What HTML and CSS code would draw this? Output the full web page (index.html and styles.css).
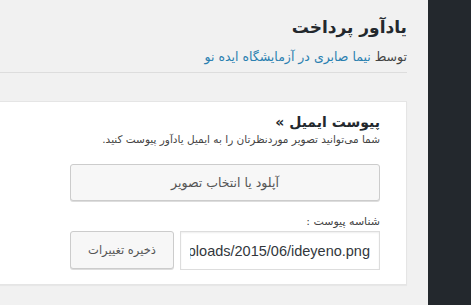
FILE: index.html
```html
<!DOCTYPE html>
<html lang="fa" dir="rtl">
<head>
    <meta charset="UTF-8">
    <title>یادآور پرداخت</title>
    <link rel="stylesheet" href="styles.css">
</head>
<body>
    <div class="sidebar"></div>
    <div class="main">
        <div class="wrap">
            <h1 class="page-title">یادآور پرداخت</h1>
            <p class="byline">توسط <a href="#">نیما صابری در آزمایشگاه ایده نو</a></p>
            <hr class="sep">

            <div class="card">
                <h2 class="card-title">پیوست ایمیل »</h2>
                <p class="card-desc">شما می‌توانید تصویر موردنظرتان را به ایمیل یادآور پیوست کنید.</p>

                <div class="field">
                    <button class="btn btn-wide">آپلود یا انتخاب تصویر</button>
                    <label class="field-label" for="attachUrl">شناسه پیوست :</label>
                    <div class="field-row">
                        <input type="text" id="attachUrl" class="url-input" value="http://ideyeno.com/wp-content/uploads/2015/06/ideyeno.png">
                        <button class="btn btn-save">ذخیره تغییرات</button>
                    </div>
                </div>
            </div>
        </div>
    </div>
</body>
</html>
```

FILE: styles.css
```css
html, body {
    height: 100%;
}
body {
    margin: 0;
    padding: 0;
    display: flex;
    background-color: #f1f1f1;
    font-family: 'DejaVu Sans', sans-serif;
    color: #444;
    overflow: hidden;
}
.sidebar {
    width: 43px;
    flex-shrink: 0;
    background-color: #23282d;
}
.main {
    flex: 1;
    overflow: hidden;
    padding-right: 21px;
}
.wrap {
    margin-left: -10px;
}
.page-title {
    margin: 15px 0 0;
    font-size: 17px;
    line-height: 24px;
    font-weight: bold;
    color: #23282d;
}
.byline {
    margin: 9px 0 0;
    font-size: 12.5px;
    line-height: 18px;
    color: #444;
}
.byline a {
    color: #2a80b0;
    text-decoration: none;
}
.sep {
    margin: 6px 0 0;
    border: none;
    border-top: 1px solid #ddd;
    height: 0;
}
.card {
    margin-top: 28px;
    background-color: #fff;
    border: 1px solid #e5e5e5;
    box-shadow: 0 1px 1px rgba(0, 0, 0, 0.04);
    padding: 10px 26px 14px;
}
.card-title {
    margin: 0;
    font-size: 14px;
    line-height: 20px;
    font-weight: bold;
    color: #23282d;
}
.card-desc {
    margin: -1px 0 0;
    font-size: 10.5px;
    line-height: 16px;
    color: #444;
}
.field {
    width: 310px;
    margin-top: 17px;
}
.btn {
    font-family: 'DejaVu Sans', sans-serif;
    font-size: 11.5px;
    color: #555;
    background-color: #f7f7f7;
    border: 1px solid #ccc;
    border-radius: 3px;
    box-shadow: 0 1px 0 #ddd;
    cursor: pointer;
}
.btn-wide {
    display: block;
    width: 100%;
    height: 37px;
    font-size: 12.5px;
}
.field-label {
    display: block;
    margin-top: 13px;
    font-size: 11px;
    line-height: 16px;
    color: #444;
}
.field-row {
    display: flex;
    gap: 6px;
    margin-top: 1px;
}
.url-input {
    width: 200px;
    height: 39px;
    box-sizing: border-box;
    padding: 0 9px;
    border: 1px solid #ddd;
    box-shadow: inset 0 1px 2px rgba(0, 0, 0, 0.07);
    font-family: 'Liberation Sans', sans-serif;
    font-size: 14.5px;
    color: #32373c;
    background-color: #fff;
}
.btn-save {
    width: 104px;
    height: 38px;
}
```
